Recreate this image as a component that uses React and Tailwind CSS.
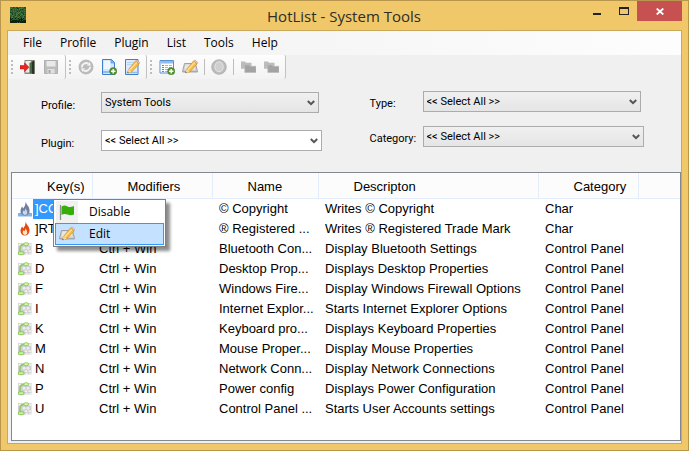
import React from 'react';

const menuItems = ['File', 'Profile', 'Plugin', 'List', 'Tools', 'Help'];

const rows = [
  { icon: 'flameSelected', keys: ']CO', mod: '', name: '© Copyright', desc: 'Writes © Copyright', cat: 'Char', selected: true },
  { icon: 'flame', keys: ']RT', mod: '', name: '® Registered ...', desc: 'Writes ® Registered Trade Mark', cat: 'Char' },
  { keys: 'B', mod: 'Ctrl + Win', name: 'Bluetooth Con...', desc: 'Display Bluetooth Settings', cat: 'Control Panel' },
  { keys: 'D', mod: 'Ctrl + Win', name: 'Desktop Prop...', desc: 'Displays Desktop Properties', cat: 'Control Panel' },
  { keys: 'F', mod: 'Ctrl + Win', name: 'Windows Fire...', desc: 'Display Windows Firewall Options', cat: 'Control Panel' },
  { keys: 'I', mod: 'Ctrl + Win', name: 'Internet Explor...', desc: 'Starts Internet Explorer Options', cat: 'Control Panel' },
  { keys: 'K', mod: 'Ctrl + Win', name: 'Keyboard pro...', desc: 'Displays Keyboard Properties', cat: 'Control Panel' },
  { keys: 'M', mod: 'Ctrl + Win', name: 'Mouse Proper...', desc: 'Display Mouse Properties', cat: 'Control Panel' },
  { keys: 'N', mod: 'Ctrl + Win', name: 'Network Conn...', desc: 'Display Network Connections', cat: 'Control Panel' },
  { keys: 'P', mod: 'Ctrl + Win', name: 'Power config', desc: 'Displays Power Configuration', cat: 'Control Panel' },
  { keys: 'U', mod: 'Ctrl + Win', name: 'Control Panel ...', desc: 'Starts User Accounts settings', cat: 'Control Panel' },
];

function AppIcon() {
  const cells = [];
  for (let y = 0; y < 16; y++) {
    for (let x = 0; x < 16; x++) {
      const n = (x * 7 + y * 13 + x * y * 5) % 11;
      const low = y > 10;
      if (n < 4) cells.push(<rect key={x + '-' + y} x={x} y={y} width="1" height="1" fill={low ? '#0c200c' : '#427a3e'} />);
      else if (n > 8) cells.push(<rect key={x + '-' + y} x={x} y={y} width="1" height="1" fill={low ? '#2c5a2a' : '#1c3f1c'} />);
    }
  }
  return (
    <svg width="16" height="16" viewBox="0 0 16 16" shapeRendering="crispEdges">
      <rect width="16" height="16" fill="#2f5c30" />
      <rect y="13" width="16" height="3" fill="#0e230e" />
      {cells}
    </svg>
  );
}

function Svg({ children }) {
  return <svg width="16" height="16" viewBox="0 0 16 16" className="block shrink-0">{children}</svg>;
}

function Pencil() {
  return (
    <g>
      <path d="M4.500 10.500 11.500 2 15 5 7.600 13 3.600 13.900Z" fill="#f5bd48" stroke="#c88a2c" strokeWidth=".6" />
      <path d="M5.800 11 12.800 3.300" stroke="#ffe39a" strokeWidth="1.200" />
      <path d="M11.800 2 13 .9 15.900 3.600 15 5Z" fill="#f0c4a0" stroke="#c08868" strokeWidth=".5" />
      <path d="M4.500 10.500 7.600 13 3.600 13.900Z" fill="#f6dcb0" />
      <path d="M3.400 14 3.900 12.500 4.900 13.500Z" fill="#444" />
    </g>
  );
}

function PlusBadge() {
  return (
    <g>
      <circle cx="12.200" cy="12.200" r="3.600" fill="#559434" stroke="#3b7420" strokeWidth=".5" />
      <path d="M12.200 10v4.400M10 12.200h4.400" stroke="#fff" strokeWidth="1.400" />
    </g>
  );
}

function ExitIcon() {
  return (
    <Svg>
      <path d="M4.500 1h10v14h-10z" fill="#8a8a84" />
      <path d="M5.500 2h5.500v11.500H5.500z" fill="#e9ece9" />
      <path d="M9.500 4 14 1.500v13.500L9.500 14z" fill="#4a6a42" />
      <path d="M12 3 14.500 1.500V15l-2.500-.4z" fill="#26361f" />
      <path d="M0 6.500h4.500V3.800L9 8.300 4.500 12.700V10H0z" fill="#ee2222" stroke="#b41212" strokeWidth=".5" />
    </Svg>
  );
}

function SaveIcon() {
  return (
    <Svg>
      <path d="M1.500 1.500h13v13h-13z" fill="#bdbdbd" stroke="#b0b0b0" />
      <path d="M3.500 2h9v5.500h-9z" fill="#e9e9e9" />
      <path d="M4.500 10h7v4.500h-7z" fill="#e0e0e0" />
      <path d="M5.500 11h2v3h-2z" fill="#a8a8a8" />
    </Svg>
  );
}

function RefreshIcon() {
  return (
    <Svg>
      <circle cx="8" cy="8" r="7" fill="#bcbcbc" stroke="#b0b0b0" strokeWidth=".8" />
      <path d="M3.800 8.500A4.300 4.300 0 0 1 10.500 4.800" fill="none" stroke="#f3f3f3" strokeWidth="1.900" />
      <path d="M9 6.500 12.800 6.800 11.800 2.900z" fill="#f3f3f3" />
      <path d="M12.200 7.800A4.300 4.300 0 0 1 5.500 11.200" fill="none" stroke="#f3f3f3" strokeWidth="1.900" />
      <path d="M7 9.500 3.200 9.200 4.200 13.100z" fill="#f3f3f3" />
    </Svg>
  );
}

function PageAddIcon() {
  return (
    <Svg>
      <path d="M1.500.5h9l3 3v12h-12z" fill="#d3e6fb" stroke="#3f7fc9" />
      <path d="M3 2h6.500v8H3z" fill="#eef6ff" />
      <path d="M10 .5v3.500h3.500z" fill="#9cc4ee" stroke="#3f7fc9" strokeWidth=".6" />
      <path d="M2 12h8v2H2z" fill="#8fbdf0" />
      <PlusBadge />
    </Svg>
  );
}

function PageEditIcon() {
  return (
    <Svg>
      <path d="M1.500.5h12.500v15H1.500z" fill="#dcebfc" stroke="#3f7fc9" />
      <path d="M3 3.500h7M3 5.500h6" stroke="#b9d4f2" />
      <path d="M2.500 13.500h11" stroke="#8fbdf0" strokeWidth="1.500" />
      <Pencil />
    </Svg>
  );
}

function ListAddIcon() {
  return (
    <Svg>
      <path d="M1 1.500h13.500v12.500H1z" fill="#fff" stroke="#5a8fd0" />
      <path d="M1.500 2h12.500v2.500h-12.500z" fill="#8fbbee" />
      <path d="M3 6.500h2M3 8.500h2M3 10.500h2M3 12.500h2" stroke="#5f9a55" />
      <path d="M6 6.500h3M10 6.500h3M6 8.500h3M10 8.500h3M6 10.500h3M6 12.500h3" stroke="#9ab8d8" />
      <PlusBadge />
    </Svg>
  );
}

function KeyEditIcon() {
  return (
    <Svg>
      <path d="M2.500 4.500h11l2 8H.5z" fill="#d2d2d2" stroke="#9a9a9a" strokeWidth=".9" />
      <path d="M3.500 5.500h9l1 5H2.500z" fill="#e6e6e6" />
      <path d="M.5 12h15v1.500H.5z" fill="#a9a9a9" />
      <Pencil />
    </Svg>
  );
}

function StopIcon() {
  return (
    <Svg>
      <circle cx="8" cy="8" r="7.300" fill="#bcbcbc" stroke="#acacac" strokeWidth=".8" />
      <ellipse cx="8" cy="7.800" rx="4.200" ry="5" fill="#cfcfcf" stroke="#e6e6e6" strokeWidth="1" />
    </Svg>
  );
}

function FoldersIcon() {
  return (
    <Svg>
      <path d="M1 2.500h4l1 1.300H11.500v6H1z" fill="#bcbcbc" />
      <path d="M4.800 6h4l1 1.300H16V13.500H4.800z" fill="#a3a3a3" stroke="#b8b8b8" strokeWidth=".6" />
    </Svg>
  );
}

function FlagIcon() {
  return (
    <Svg>
      <path d="M1.500 1v15" stroke="#8a8f8a" strokeWidth="1.200" />
      <path d="M2.500 2.500C5 1 6.500 1.500 8.500 2.500S12.500 3 15 2v8.500c-2.500 1-4.500.8-6.500 0S5 9.500 2.500 11z" fill="#36ad09" />
    </Svg>
  );
}

function FlameIcon({ selected }) {
  return (
    <Svg>
      {selected && <path d="M1 12h2l2-1.500h7L13 12h2v3.500H1z" fill="#7fb4ea" />}
      <path d="M8.500.5C9 3.500 13 5.500 12.500 10c-.3 2.800-2.200 4.500-4.700 4.500S3.500 12.500 3.500 10c0-2 1-3.200 1.500-4.500.7.800 1 1.500 1.200 2C7.800 5.500 8.800 3 8.500.5z" fill={selected ? '#6e7f9f' : '#e24a10'} />
      <path d="M8.500 7c.2 1.500 2 2.500 1.800 4.500-.1 1.500-1 2.500-2.300 2.500s-2.300-1-2.300-2.500c0-1 .5-1.700 1-2.200.3.500.5.800.6 1 .8-1 1.300-2 1.200-3.300z" fill={selected ? '#c9d5ea' : '#ffe0c8'} />
    </Svg>
  );
}

function KeysIcon() {
  return (
    <Svg>
      <path d="M1 2h13.500v11.500H1z" fill="#cfcfcf" />
      <g fill="#efefef">
        <rect x="1.500" y="2.500" width="2.500" height="2.500" rx="1" />
        <rect x="12" y="2.500" width="2.500" height="2.500" rx="1" />
        <rect x="5.500" y="6" width="3" height="2.500" rx="1" />
        <rect x="9.500" y="6" width="3" height="2.500" rx="1" />
        <rect x="7.500" y="9.300" width="3" height="1.800" rx=".8" />
        <rect x="11.300" y="9.300" width="3.200" height="1.800" rx=".8" />
        <rect x="8.500" y="11.800" width="2.500" height="2" rx=".8" />
        <rect x="12" y="11.800" width="2.500" height="2" rx=".8" />
      </g>
      <path d="M3 10.500V7c0-2.300 1.200-3.300 3.800-3.500" fill="none" stroke="#8ac45c" strokeWidth="1.300" />
      <ellipse cx="9.200" cy="3.200" rx="2.400" ry="1.500" fill="#d6f8b4" stroke="#8acb52" strokeWidth=".9" />
      <rect x="1.400" y="10.700" width="5.500" height="3" rx="1.200" fill="#c6f09a" stroke="#7fc648" strokeWidth=".9" />
    </Svg>
  );
}

function ToolButton({ label, children }) {
  return <button type="button" aria-label={label} className="flex h-4 w-4 items-center justify-center">{children}</button>;
}

function Grip() {
  return (
    <span className="flex w-[2px] shrink-0 flex-col gap-[2px]">
      {[0, 1, 2, 3].map((i) => <i key={i} className="block h-[2px] w-[2px] bg-[#bdbdbd]" />)}
    </span>
  );
}

function Strip({ children }) {
  return (
    <div className="flex h-6 items-center gap-[7px] rounded-r-[2px] border-r border-[#c2c2c2] bg-linear-to-b from-[#fdfdfd] to-[#f3f3f3] pr-[6px] pl-[3px]">
      <Grip />
      {children}
    </div>
  );
}

function Divider() {
  return <span className="-mx-px h-4 w-px bg-[#bdbdbd]" />;
}

function Field({ id, label, value, wide, white }) {
  return (
    <div className={'flex h-[21px] items-center ' + (wide ? '' : 'mr-[3px]')}>
      <label htmlFor={id} className="w-[60px] shrink-0 pt-[8px] in-[.right]:w-[53px] in-[.right]:pt-[6px]">{label}</label>
      <div className="relative flex-1">
        <select
          id={id}
          className={'block h-[21px] w-full appearance-none border border-[#acacac] pt-[2px] pl-[3px] outline-none ' + (white ? 'bg-white' : 'bg-linear-to-b from-[#f0f0f0] to-[#e5e5e5]')}
        >
          <option>{value}</option>
        </select>
        <svg width="8" height="6" viewBox="0 0 8 6" className="pointer-events-none absolute top-2 right-[4px]">
          <path d="M.8 1 4 4.200 7.200 1" fill="none" stroke="#555" strokeWidth="2" />
        </svg>
      </div>
    </div>
  );
}

function ContextMenu() {
  return (
    <div role="menu" className="absolute top-[26px] left-[41px] z-10 w-[113px] border border-[#808080] bg-white p-px font-['Open_Sans',sans-serif] text-[12px] shadow-[4px_4px_3px_rgba(0,0,0,0.45)]">
      <button type="button" role="menuitem" className="flex h-[22px] w-full items-center gap-[11px] pl-[1px]">
        <span className="flex h-[22px] w-[22px] items-center justify-center bg-[#f1f1f1]"><FlagIcon /></span>
        Disable
      </button>
      <button type="button" role="menuitem" className="flex h-[22px] w-full items-center gap-[11px] border border-[#3399ff] bg-[#c4e1ff]">
        <span className="flex w-[22px] justify-center"><KeyEditIcon /></span>
        Edit
      </button>
    </div>
  );
}

export default function App() {
  return (
    <div className="flex h-screen flex-col border border-[#b8964e] bg-[#f0c869] px-[6px] pb-[6px] font-['Liberation_Sans',Arial,sans-serif] text-black">
      <header className="flex h-[29px] shrink-0 items-start">
        <div className="flex w-[98px] pt-[6px] pl-[3px]"><AppIcon /></div>
        <h1 className="flex-1 pt-[3px] text-center font-['Open_Sans',sans-serif] text-[15px] leading-6 text-[#2f2d26]">HotList - System Tools</h1>
        <div className="flex h-5">
          <button type="button" aria-label="Minimize" className="flex w-[28px] items-center justify-center pt-[6px]">
            <span className="h-[2px] w-2 bg-[#222]" />
          </button>
          <button type="button" aria-label="Maximize" className="flex w-[26px] items-center justify-center">
            <span className="h-2 w-[10px] border border-t-2 border-[#222]" />
          </button>
          <button type="button" aria-label="Close" className="flex w-[45px] items-center justify-center bg-[#c75050]">
            <svg width="8" height="7" viewBox="0 0 8 7"><path d="M.7.5 7.300 6.500M7.300.5.7 6.500" stroke="#fff" strokeWidth="1.800" /></svg>
          </button>
        </div>
      </header>

      <main className="flex min-h-0 flex-1 flex-col border border-[#c9a85a] bg-[#f0f0f0]">
        <nav className="flex h-6 shrink-0 items-center gap-[18px] bg-linear-to-r from-[#f0f0f0] to-[#fdfdfd] pl-[15px] font-['Open_Sans',sans-serif] text-[12px]">
          {menuItems.map((m) => <button type="button" key={m}>{m}</button>)}
        </nav>

        <div className="flex h-6 shrink-0">
          <Strip>
            <ToolButton label="Exit"><ExitIcon /></ToolButton>
            <ToolButton label="Save"><SaveIcon /></ToolButton>
          </Strip>
          <Strip>
            <ToolButton label="Refresh"><RefreshIcon /></ToolButton>
            <ToolButton label="New profile"><PageAddIcon /></ToolButton>
            <ToolButton label="Edit profile"><PageEditIcon /></ToolButton>
          </Strip>
          <Strip>
            <ToolButton label="New hotkey"><ListAddIcon /></ToolButton>
            <ToolButton label="Edit hotkey"><KeyEditIcon /></ToolButton>
            <Divider />
            <ToolButton label="Stop"><StopIcon /></ToolButton>
            <Divider />
            <ToolButton label="Copy"><FoldersIcon /></ToolButton>
            <ToolButton label="Move"><FoldersIcon /></ToolButton>
          </Strip>
        </div>

        <form className="grid shrink-0 grid-cols-2 pb-[21px] font-[Roboto,sans-serif] text-[11px]">
          <div className="flex flex-col gap-[17px] pt-[13px] pr-[23px] pl-[33px]">
            <Field id="profile" label="Profile:" value="System Tools" />
            <Field id="plugin" label="Plugin:" value="<< Select All >>" wide white />
          </div>
          <div className="right flex flex-col gap-[14px] pt-[12px] pr-[37px] pl-[25px]">
            <Field id="type" label="Type:" value="<< Select All >>" />
            <Field id="category" label="Category:" value="<< Select All >>" wide />
          </div>
        </form>

        <section className="relative mb-[2px] ml-[3px] min-h-0 flex-1 border border-[#828790] bg-white">
          <table className="w-full table-fixed border-collapse text-[13px] leading-5 whitespace-nowrap">
            <colgroup>
              <col className="w-[80px]" />
              <col className="w-[120px]" />
              <col className="w-[106px]" />
              <col className="w-[220px]" />
              <col className="w-[100px]" />
              <col />
            </colgroup>
            <thead>
              <tr className="h-[25px] border-b border-[#e3edfb] bg-[#fcfcfc]">
                {['Key(s)', 'Modifiers', 'Name', 'Descripton', 'Category'].map((h) => (
                  <th key={h} scope="col" className="border-r border-[#e3edfb] pt-[3px] pl-[35px] text-left font-normal">{h}</th>
                ))}
                <td />
              </tr>
            </thead>
            <tbody>
              {rows.map((r) => (
                <tr key={r.keys} className="h-5">
                  <td className="pl-[5px]">
                    <div className="flex h-5 items-center">
                      {r.icon ? <FlameIcon selected={r.selected} /> : <KeysIcon />}
                      <span className={'h-5 pl-[2px] ' + (r.selected ? 'w-10 bg-[#3399ff] text-white' : '')}>{r.keys}</span>
                    </div>
                  </td>
                  <td className="pl-[7px]">{r.mod}</td>
                  <td className="pl-[7px]">{r.name}</td>
                  <td className="pl-[7px]">{r.desc}</td>
                  <td className="pl-[7px]">{r.cat}</td>
                  <td />
                </tr>
              ))}
            </tbody>
          </table>
          <ContextMenu />
        </section>
      </main>
    </div>
  );
}
